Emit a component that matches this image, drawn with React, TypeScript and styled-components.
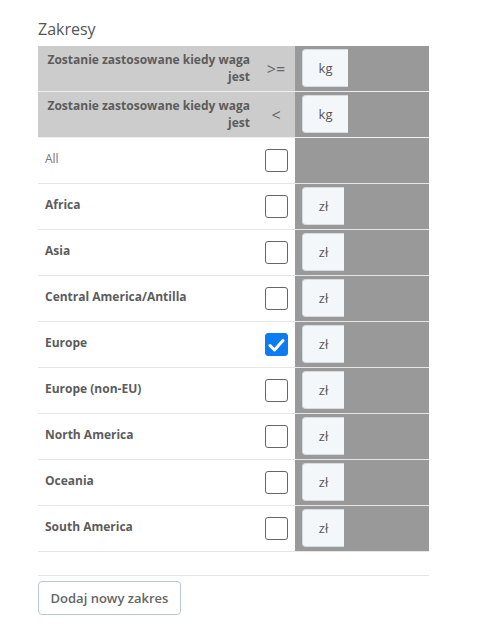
import React from "react";
import styled, { createGlobalStyle } from "styled-components";

const GlobalStyle = createGlobalStyle`
  body {
    margin: 0;
    background: #fff;
    font-family: "Open Sans", "Liberation Sans", sans-serif;
  }
`;

const Page = styled.div`
  padding: 18px 0 0 38px;
  width: 391px;
`;

const Title = styled.h3`
  margin: 0 0 6px;
  font-size: 16px;
  font-weight: 400;
  color: #555;
  line-height: 22px;
`;

const Row = styled.div<{ $header?: boolean }>`
  display: grid;
  grid-template-columns: 219px 38px 1fr;
  height: 45px;
  border-bottom: 1px solid ${(p) => (p.$header ? "#eeeeee" : "#e6e6e6")};
  background: ${(p) => (p.$header ? "#cccccc" : "#fff")};
`;

const Label = styled.div<{ $header?: boolean; $plain?: boolean }>`
  padding: ${(p) => (p.$header ? "5px 7px 0 7px" : "12px 7px 0 7px")};
  font-size: 12px;
  line-height: ${(p) => (p.$header ? "17px" : "18px")};
  font-weight: ${(p) => (p.$plain ? 400 : 700)};
  color: ${(p) => (p.$plain ? "#777" : "#5c5c5c")};
  text-align: ${(p) => (p.$header ? "right" : "left")};
`;

const Mid = styled.div`
  display: flex;
  align-items: center;
  justify-content: center;
  font-size: 16px;
  color: #666;
`;

const Check = styled.span<{ $on?: boolean }>`
  box-sizing: border-box;
  width: 23px;
  height: 23px;
  border-radius: 3px;
  border: 1px solid ${(p) => (p.$on ? "#0d7bf2" : "#666")};
  background: ${(p) => (p.$on ? "#0d7bf2" : "#fff")};
  display: flex;
  align-items: center;
  justify-content: center;
`;

const Dark = styled.div`
  background: #999999;
  padding: 3px 0 0 7px;
`;

const Unit = styled.div<{ $wide?: boolean }>`
  box-sizing: border-box;
  width: ${(p) => (p.$wide ? "46px" : "42px")};
  height: 38px;
  background: #f4f7f9;
  border: 1px solid #d5dbe0;
  border-right: none;
  border-radius: 4px 0 0 4px;
  display: flex;
  align-items: center;
  justify-content: center;
  font-size: 13px;
  color: #555;
`;

const Rule = styled.div`
  height: 1px;
  background: #e6e6e6;
  margin-top: 23px;
`;

const AddButton = styled.button`
  margin-top: 5px;
  width: 143px;
  height: 34px;
  background: #fff;
  border: 1px solid #b9c8cf;
  border-radius: 4px;
  font-family: "Open Sans", "Liberation Sans", sans-serif;
  font-size: 13px;
  font-weight: 600;
  color: #666;
`;

const Tick = () => (
  <svg width="17" height="14" viewBox="0 0 17 14">
    <path d="M2 7.5 L6.5 12 L15 2.5" fill="none" stroke="#fff" strokeWidth="3" strokeLinecap="round" strokeLinejoin="round" />
  </svg>
);

const regions = [
  { name: "Africa", on: false },
  { name: "Asia", on: false },
  { name: "Central America/Antilla", on: false },
  { name: "Europe", on: true },
  { name: "Europe (non-EU)", on: false },
  { name: "North America", on: false },
  { name: "Oceania", on: false },
  { name: "South America", on: false },
];

const headerLabel = "Zostanie zastosowane kiedy waga jest";

export default function App() {
  return (
    <>
      <GlobalStyle />
      <Page>
        <Title>Zakresy</Title>
        {[">=", "<"].map((op) => (
          <Row $header key={op}>
            <Label $header>{headerLabel}</Label>
            <Mid>{op}</Mid>
            <Dark>
              <Unit $wide>kg</Unit>
            </Dark>
          </Row>
        ))}
        <Row>
          <Label $plain>All</Label>
          <Mid>
            <Check />
          </Mid>
          <Dark />
        </Row>
        {regions.map((r) => (
          <Row key={r.name}>
            <Label>{r.name}</Label>
            <Mid>
              <Check $on={r.on}>{r.on && <Tick />}</Check>
            </Mid>
            <Dark>
              <Unit>zł</Unit>
            </Dark>
          </Row>
        ))}
        <Rule />
        <AddButton>Dodaj nowy zakres</AddButton>
      </Page>
    </>
  );
}
